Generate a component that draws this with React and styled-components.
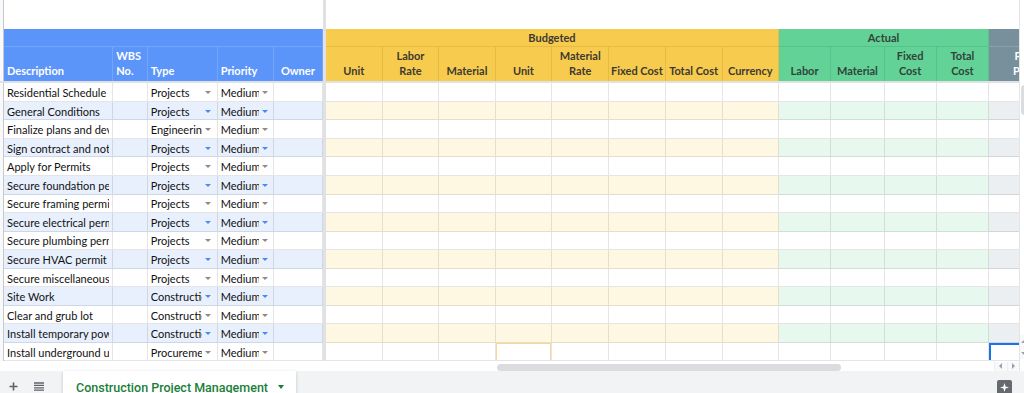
import React from 'react';
import styled, { createGlobalStyle } from 'styled-components';

const GlobalStyle = createGlobalStyle`
  html, body { margin: 0; padding: 0; background: #fff; overflow: hidden; }
  body { width: 1024px; height: 393px; font-family: Lato, "Liberation Sans", sans-serif; }
  * { box-sizing: border-box; }
`;

const palette = {
  left: { head: '#5b95f9', band: '#e8f0fe', ink: '#ffffff', rule: '#74a5fa', arrow: '#4a89f3' },
  budget: { head: '#f7cb4d', band: '#fef8e3', ink: '#3d3a33', rule: '#e5bb46' },
  actual: { head: '#63d297', band: '#e7f9ef', ink: '#31443a', rule: '#57c28a' },
  extra: { head: '#78909c', band: '#ebeff1', ink: '#ffffff', rule: '#8aa0aa' },
};

const leftCols = [
  { w: 109.3, label: 'Description', align: 'flex-start', kind: 'text' },
  { w: 34.4, label: 'WBS\nNo.', align: 'flex-start', kind: 'empty' },
  { w: 70, label: 'Type', align: 'flex-start', kind: 'type' },
  { w: 56.3, label: 'Priority', align: 'flex-start', kind: 'priority' },
  { w: 48.7, label: 'Owner', align: 'center', kind: 'empty' },
];
const budgetCols = [
  { w: 56.7, label: 'Unit' },
  { w: 56.6, label: 'Labor\nRate' },
  { w: 56.4, label: 'Material' },
  { w: 56.6, label: 'Unit' },
  { w: 57, label: 'Material\nRate' },
  { w: 56.4, label: 'Fixed Cost' },
  { w: 57, label: 'Total Cost' },
  { w: 56.3, label: 'Currency' },
];
const actualCols = [
  { w: 52.3, label: 'Labor' },
  { w: 53.4, label: 'Material' },
  { w: 52, label: 'Fixed\nCost' },
  { w: 52.6, label: 'Total\nCost' },
];
const extraCols = [{ w: 91, label: 'Planned\nProgress' }];

const STRIP = 4;
const DIVIDER = 3.3;
const TEMPLATE = [STRIP, ...leftCols.map(c => c.w), DIVIDER, ...budgetCols.map(c => c.w), ...actualCols.map(c => c.w), ...extraCols.map(c => c.w)]
  .map(w => `${w}px`).join(' ');

const tasks = [
  ['Residential Schedule', 'Projects'],
  ['General Conditions', 'Projects'],
  ['Finalize plans and develop estimate', 'Engineering'],
  ['Sign contract and notice to proceed', 'Projects'],
  ['Apply for Permits', 'Projects'],
  ['Secure foundation permit', 'Projects'],
  ['Secure framing permit', 'Projects'],
  ['Secure electrical permit', 'Projects'],
  ['Secure plumbing permit', 'Projects'],
  ['Secure HVAC permit', 'Projects'],
  ['Secure miscellaneous permits', 'Projects'],
  ['Site Work', 'Construction'],
  ['Clear and grub lot', 'Construction'],
  ['Install temporary power', 'Construction'],
  ['Install underground utilities', 'Procurement'],
];

/* ---------- layout ---------- */
const Window = styled.div`
  width: 1024px;
  height: 393px;
  display: flex;
  flex-direction: column;
  overflow: hidden;
`;
const Main = styled.div`
  height: 371px;
  display: flex;
  flex-shrink: 0;
`;
const Viewport = styled.div`
  width: 1019px;
  flex-shrink: 0;
  display: flex;
  flex-direction: column;
  overflow: hidden;
`;
const Rows = styled.div`
  flex: 1;
  overflow: hidden;
`;
const GridRow = styled.div`
  display: grid;
  grid-template-columns: ${TEMPLATE};
  height: ${p => p.$h}px;
`;
const HeaderGrid = styled.div`
  display: grid;
  grid-template-columns: ${TEMPLATE};
  grid-template-rows: 18px 33.7px;
`;
const Strip = styled.div`
  grid-row: span ${p => p.$rows || 1};
  background: #f8f9fa;
  border-right: 1px solid #c6c8cb;
`;
const Divider = styled.div`
  grid-row: span ${p => p.$rows || 1};
  background: #dfe1e5;
`;
const Blank = styled.div`
  grid-column: span ${p => p.$span};
  background: #fff;
`;
const FreezeLine = styled.div`
  height: 2.3px;
  background: #dfe1e5;
`;

/* ---------- header ---------- */
const GroupCell = styled.div`
  grid-column: span ${p => p.$span};
  background: ${p => palette[p.$tone].head};
  color: ${p => palette[p.$tone].ink};
  border-right: 1px solid ${p => palette[p.$tone].rule};
  border-bottom: 1px solid ${p => palette[p.$tone].rule};
  display: flex;
  align-items: center;
  justify-content: center;
  font-size: 11px;
  font-weight: 700;
`;
const HeadCell = styled.div`
  background: ${p => palette[p.$tone].head};
  color: ${p => palette[p.$tone].ink};
  border-right: 1px solid ${p => palette[p.$tone].rule};
  display: flex;
  align-items: flex-end;
  justify-content: ${p => p.$align || 'center'};
  text-align: ${p => (p.$align === 'flex-start' ? 'left' : 'center')};
  padding: 0 ${p => (p.$align === 'flex-start' ? 3 : 1)}px 3px;
  font-size: 11px;
  line-height: 14.3px;
  font-weight: 700;
  white-space: pre;
  overflow: hidden;
`;

/* ---------- body ---------- */
const Cell = styled.div`
  position: relative;
  background: ${p => (p.$band ? palette[p.$tone].band : '#ffffff')};
  border-right: 1px solid rgba(0, 0, 0, 0.1);
  border-bottom: 1px solid rgba(0, 0, 0, 0.1);
  display: flex;
  align-items: center;
  padding: 1px 3px 0;
  font-size: 11px;
  color: #111;
  white-space: nowrap;
  overflow: hidden;
  box-shadow: ${p => (p.$selected ? 'inset 2px 2px 0 #1a73e8' : p.$cursor ? 'inset 1px 1px 0 #fbd68f, inset -1px 0 0 #fbd68f' : 'none')};
`;
const CellText = styled.span`
  flex: 1;
  min-width: 0;
  overflow: hidden;
`;
const Caret = styled.span`
  flex-shrink: 0;
  width: 0;
  height: 0;
  margin: 0 ${p => p.$gap}px 0 3px;
  border-left: 3px solid transparent;
  border-right: 3px solid transparent;
  border-top: 3.5px solid ${p => (p.$band ? palette.left.arrow : '#8a8a8a')};
`;

/* ---------- scrollbars ---------- */
const HScroll = styled.div`
  height: 9.5px;
  display: flex;
  background: #fff;
`;
const Track = styled.div`
  position: relative;
  flex: 1;
`;
const HThumb = styled.div`
  position: absolute;
  left: 497px;
  width: 344px;
  top: 2px;
  height: 7px;
  border-radius: 4px;
  background: #dadce0;
`;
const ScrollBtn = styled.div`
  width: 12.5px;
  background: #f8f9fa;
  border-left: 1px solid #eceef0;
  display: flex;
  align-items: center;
  justify-content: center;
`;
const Tri = styled.span`
  width: 0;
  height: 0;
  ${p => (p.$dir === 'left' ? 'border-right: 3px solid #9aa0a6;' : '')}
  ${p => (p.$dir === 'right' ? 'border-left: 3px solid #9aa0a6;' : '')}
  ${p => (p.$dir === 'left' || p.$dir === 'right' ? 'border-top: 3px solid transparent; border-bottom: 3px solid transparent;' : '')}
  ${p => (p.$dir === 'up' ? 'border-bottom: 3px solid #9aa0a6;' : '')}
  ${p => (p.$dir === 'down' ? 'border-top: 3px solid #9aa0a6;' : '')}
  ${p => (p.$dir === 'up' || p.$dir === 'down' ? 'border-left: 3px solid transparent; border-right: 3px solid transparent;' : '')}
`;
const VScroll = styled.div`
  width: 15px;
  flex-shrink: 0;
  background: #fff;
  border-left: 1px solid #e3e5e8;
  display: flex;
  flex-direction: column;
  padding-top: 85px;
`;
const VThumb = styled.div`
  margin-left: 1px;
  width: 9px;
  height: 30px;
  border-radius: 4px;
  background: #dadce0;
`;
const VButtons = styled.div`
  margin-top: auto;
  margin-bottom: 12px;
  display: flex;
  flex-direction: column;
`;
const VBtn = styled.div`
  height: 12px;
  display: flex;
  align-items: center;
  padding-left: 1px;
  background: #f8f9fa;
`;

/* ---------- bottom bar ---------- */
const BottomBar = styled.div`
  flex-shrink: 0;
  height: 40px;
  background: #f1f3f4;
  display: flex;
  align-items: flex-start;
`;
const BarIcon = styled.svg`
  flex-shrink: 0;
  margin-top: 11px;
  margin-left: ${p => p.$ml}px;
`;
const SheetTab = styled.div`
  margin-left: 19.5px;
  height: 32px;
  background: #fff;
  display: flex;
  align-items: center;
  padding: 0 12px 0 13px;
  box-shadow: 0 1px 3px rgba(60, 64, 67, 0.25);
  font-family: Roboto, "Liberation Sans", sans-serif;
  font-size: 12.5px;
  font-weight: 500;
  color: #188038;
  white-space: nowrap;
`;
const TabCaret = styled.span`
  margin-left: 10px;
  width: 0;
  height: 0;
  border-left: 3px solid transparent;
  border-right: 3px solid transparent;
  border-top: 4px solid #188038;
`;
const ExploreBtn = styled.div`
  margin: 9px 12px 0 auto;
  width: 15px;
  height: 15px;
  border-radius: 2px;
  background: #66696d;
  display: flex;
  align-items: center;
  justify-content: center;
`;

const toneCols = [
  ['budget', budgetCols],
  ['actual', actualCols],
  ['extra', extraCols],
];

function Header() {
  return (
    <HeaderGrid>
      <Strip $rows={2} />
      <GroupCell $span={5} $tone="left" />
      <Divider $rows={2} />
      <GroupCell $span={8} $tone="budget">Budgeted</GroupCell>
      <GroupCell $span={4} $tone="actual">Actual</GroupCell>
      <GroupCell $span={1} $tone="extra" />
      {leftCols.map(c => (
        <HeadCell key={c.label} $tone="left" $align={c.align}>{c.label}</HeadCell>
      ))}
      {toneCols.map(([tone, cols]) =>
        cols.map((c, i) => (
          <HeadCell key={tone + i} $tone={tone}>{c.label}</HeadCell>
        ))
      )}
    </HeaderGrid>
  );
}

function DataRow({ desc, type, index, last }) {
  const band = index % 2 === 1;
  return (
    <GridRow $h={18.55}>
      <Strip />
      {leftCols.map((c, i) => {
        if (c.kind === 'text') return <Cell key={i} $tone="left" $band={band}><CellText>{desc}</CellText></Cell>;
        if (c.kind === 'type' || c.kind === 'priority') {
          return (
            <Cell key={i} $tone="left" $band={band}>
              <CellText>{c.kind === 'type' ? type : 'Medium'}</CellText>
              <Caret $band={band} $gap={c.kind === 'type' ? 2.7 : 2} />
            </Cell>
          );
        }
        return <Cell key={i} $tone="left" $band={band} />;
      })}
      <Divider />
      {toneCols.map(([tone, cols]) =>
        cols.map((c, i) => (
          <Cell
            key={tone + i}
            $tone={tone}
            $band={band}
            $selected={last && tone === 'extra'}
            $cursor={last && tone === 'budget' && i === 3}
          />
        ))
      )}
    </GridRow>
  );
}

export default function App() {
  return (
    <Window>
      <GlobalStyle />
      <Main>
        <Viewport>
          <Rows>
            <GridRow $h={29.3}>
              <Strip />
              <Blank $span={5} />
              <Divider />
              <Blank $span={13} />
            </GridRow>
            <Header />
            <FreezeLine />
            {tasks.map(([d, t], i) => (
              <DataRow key={i} desc={d} type={t} index={i} last={i === tasks.length - 1} />
            ))}
          </Rows>
          <HScroll>
            <Track><HThumb /></Track>
            <ScrollBtn><Tri $dir="left" /></ScrollBtn>
            <ScrollBtn><Tri $dir="right" /></ScrollBtn>
          </HScroll>
        </Viewport>
        <VScroll>
          <VThumb />
          <VButtons>
            <VBtn><Tri $dir="up" /></VBtn>
            <VBtn><Tri $dir="down" /></VBtn>
          </VButtons>
        </VScroll>
      </Main>
      <BottomBar>
        <BarIcon $ml={9} width="9" height="9" viewBox="0 0 9 9">
          <path d="M4.5 0.5v8M0.5 4.5h8" stroke="#5f6368" strokeWidth="1.6" fill="none" />
        </BarIcon>
        <BarIcon $ml={15.5} width="10" height="9" viewBox="0 0 10 9">
          <path d="M0 1h10M0 3.4h10M0 5.8h10M0 8.2h10" stroke="#5f6368" strokeWidth="1.3" fill="none" />
        </BarIcon>
        <SheetTab>
          Construction Project Management
          <TabCaret />
        </SheetTab>
        <ExploreBtn>
          <svg width="11" height="11" viewBox="0 0 11 11">
            <path d="M5.5 1 L6.6 4.4 L10 5.5 L6.6 6.6 L5.5 10 L4.4 6.6 L1 5.5 L4.4 4.4 Z" fill="#fff" />
          </svg>
        </ExploreBtn>
      </BottomBar>
    </Window>
  );
}
